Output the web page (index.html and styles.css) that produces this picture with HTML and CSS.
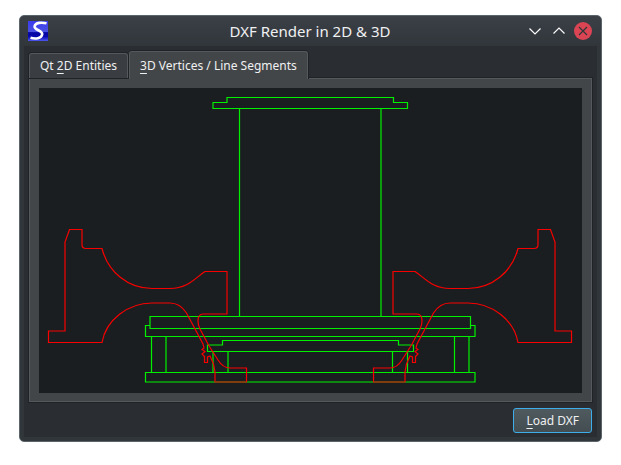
FILE: index.html
```html
<!DOCTYPE html>
<html lang="en">
<head>
<meta charset="utf-8">
<title>DXF Render in 2D &amp; 3D</title>
<link rel="stylesheet" href="styles.css">
</head>
<body>
<main class="window">
  <header class="titlebar">
    <svg class="app-icon" viewBox="0 0 20 20" aria-hidden="true">
      <defs>
        <linearGradient id="logo" x1="0" y1="0" x2="0" y2="1">
          <stop offset="0" stop-color="#3a3cf0"/>
          <stop offset=".54" stop-color="#4a50e0"/>
          <stop offset=".58" stop-color="#0505a0"/>
          <stop offset=".78" stop-color="#0808b0"/>
          <stop offset="1" stop-color="#5058f0"/>
        </linearGradient>
      </defs>
      <rect width="20" height="20" fill="url(#logo)"/>
      <path d="M18.500 2.300C14 1.200 7.500 1.300 6.600 5.200C5.800 9 14.800 9.500 14.200 13.400C13.500 17.800 7 18 2.500 16.800" fill="none" stroke="#fff" stroke-width="2.600"/>
    </svg>
    <h1 class="title">DXF Render in 2D &amp; 3D</h1>
    <div class="controls">
      <button class="control" type="button" aria-label="Minimize"><svg viewBox="0 0 18 18"><path d="M3.500 6.500L9 12L14.500 6.500"/></svg></button>
      <button class="control" type="button" aria-label="Maximize"><svg viewBox="0 0 18 18"><path d="M3.500 11.500L9 6L14.500 11.500"/></svg></button>
      <button class="control close" type="button" aria-label="Close"><svg viewBox="0 0 18 18"><path d="M5 5L13 13M13 5L5 13"/></svg></button>
    </div>
  </header>
  <div class="content">
    <div class="tabs" role="tablist">
      <button class="tab" type="button" role="tab" aria-selected="false">Qt <u>2</u>D Entities</button>
      <button class="tab active" type="button" role="tab" aria-selected="true"><u>3</u>D Vertices / Line Segments</button>
    </div>
    <section class="panel" role="tabpanel">
      <svg class="drawing" viewBox="39 88 543 305" role="img" aria-label="Line segments">
        <g class="green">
          <path d="M213 108.500V102.500H227V97.500H393.500V102.500H407.500V108.500ZM239.500 108.500V316.500M381 108.500V316.500"/>
          <path d="M150 316.500H470.500V328.500H150ZM150 325.500H145.500V336.500H475V325.500H470.500"/>
          <path d="M151.500 336.500V372.500M166 336.500V372.500M454.500 336.500V372.500M469 336.500V372.500M145.500 372.500H475V382H145.500Z"/>
          <path d="M207.500 351.500V345H222.500V340.500H398.500V345H413.500V351.500ZM213 351.500V372.500M228 351.500V372.500M392.500 351.500V372.500M407.500 351.500V372.500"/>
        </g>
        <defs>
          <path id="profile" d="M48.500 342.500V331H65V242L69.500 229.500H82V244.500Q82 248.500 86 248.500H102C108 272 128 288.500 152 288.500H170C188 288.500 195 278 205 271.500H227V314H203Q198 314 198 321Q198 325 200 329L208.500 345L218 360Q223 368 230 368H246.500V382H215V372L213.500 364L210 356L207.500 357V362.500H204.500V356.500L202 354L205 351.500L202 349.500L204 348L203 344L186.500 313Q180 303 170 303H152C128 303 106 320 102 342.500Z"/>
        </defs>
        <g class="red">
          <use href="#profile"/>
          <use href="#profile" transform="translate(620 0) scale(-1 1)"/>
        </g>
        <path class="overlap" d="M215 382H246.500M373.500 382H405"/>
      </svg>
    </section>
    <footer class="actions">
      <button class="load" type="button"><u>L</u>oad DXF</button>
    </footer>
  </div>
</main>
</body>
</html>
```
FILE: styles.css
```css
* { box-sizing: border-box; }

body {
  margin: 0;
  padding: 15px 19px;
  background: #fff;
  color: #eff0f1;
  font: 12px/16px "Noto Sans", sans-serif;
}

button {
  margin: 0;
  font: inherit;
  color: inherit;
}

u {
  text-decoration-thickness: 1px;
  text-underline-offset: 3px;
  text-decoration-skip-ink: none;
}

.window {
  padding: 0 4px 4px;
  border: 1px solid #5a646b;
  border-radius: 5px;
  background: linear-gradient(#3b4047, #31363b 30px);
}

.titlebar {
  display: grid;
  grid-template-columns: 1fr auto 1fr;
  align-items: center;
  height: 30px;
  padding: 0 5px 0 4px;
}

.app-icon {
  width: 20px;
  height: 20px;
}

.title {
  margin: 0;
  font-size: 15px;
  line-height: 20px;
  font-weight: 400;
}

.controls {
  display: flex;
  justify-content: flex-end;
  gap: 6px;
}

.control {
  width: 18px;
  height: 18px;
  padding: 0;
  border: 0;
  border-radius: 50%;
  background: none;
}

.control svg {
  display: block;
  fill: none;
  stroke: #fcfcfc;
  stroke-width: 1.2;
}

.close { background: #da4453; }
.close svg { stroke: #31363b; }

.content {
  padding: 5px 5px 4px;
  background: #2a2e32;
}

.tabs {
  display: flex;
  align-items: flex-end;
}

.tab {
  height: 25px;
  padding: 0 10px;
  border: 1px solid #55595d;
  border-bottom: 0;
  border-radius: 3px 3px 0 0;
  background: #3a3e43;
  box-shadow: 0 0 0 1px #202326;
}

.active {
  z-index: 1;
  height: 28px;
  margin: 0 0 -1px 1px;
  background: #434649;
  box-shadow: 0 -1px #202326, 1px 0 #202326;
}

.panel {
  padding: 9px 9px 8px;
  border: 1px solid #55595d;
  background: #434649;
  box-shadow: 0 0 0 1px #202326;
}

.drawing {
  display: block;
  width: 100%;
  background: #1b1e20;
  fill: none;
  stroke-width: 1.2;
}

.green { stroke: #00f000; }
.red { stroke: #f80000; }
.overlap { stroke: #7c3a10; }

.actions {
  display: flex;
  justify-content: flex-end;
  padding-top: 6px;
}

.load {
  height: 25px;
  padding: 0 12px;
  border: 1px solid #3daee9;
  border-radius: 3px;
  background: linear-gradient(#4f5a5f, #434d52);
}
```
